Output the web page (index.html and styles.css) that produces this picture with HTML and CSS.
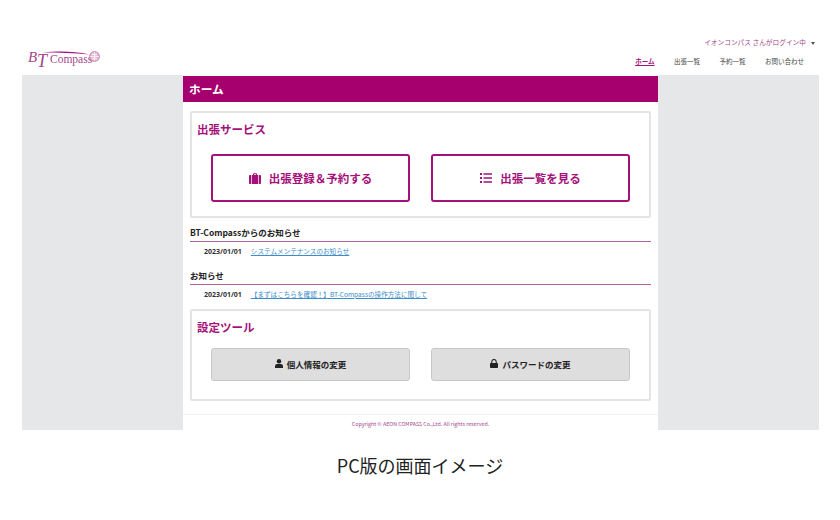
FILE: index.html
```html
<!DOCTYPE html>
<html lang="ja">
<head>
    <meta charset="UTF-8">
    <title>BT Compass</title>
    <link rel="stylesheet" href="styles.css">
</head>
<body>
    <header class="header">
        <a class="logo">
            <svg class="logo-swoosh" width="46" height="5" viewBox="0 0 46 5"><path d="M0 1.500 C14 0 32 0 46 3.500 C32 1.800 14 1.800 0 1.500 Z" fill="#a8127a"/></svg>
            <span class="logo-b">B</span><span class="logo-t">T</span><span class="logo-name">Compass</span>
            <svg class="logo-globe" width="11" height="11" viewBox="0 0 12 12"><circle cx="6" cy="6" r="5.300" fill="#e6bfd8" stroke="#a8548e" stroke-width=".8"/><path d="M1 6h10M6 1v10M3 2.500c2 2 4 2 6 0M3 9.500c2-2 4-2 6 0" stroke="#fff" fill="none" stroke-width=".8"/></svg>
        </a>
        <div class="header-right">
            <div class="user">イオンコンパス さんがログイン中<span class="caret"></span></div>
            <nav class="nav">
                <a class="nav-item active">ホーム</a>
                <a class="nav-item">出張一覧</a>
                <a class="nav-item">予約一覧</a>
                <a class="nav-item">お問い合わせ</a>
            </nav>
        </div>
    </header>

    <div class="stage">
        <main class="main">
            <h1 class="title">ホーム</h1>

            <section class="card service">
                <h2>出張サービス</h2>
                <div class="btn-row">
                    <a class="btn btn-primary">
                        <svg width="12" height="11" viewBox="0 0 12 11"><path d="M4 2V1.200A1 1 0 0 1 5 .2h2a1 1 0 0 1 1 1V2H11a1 1 0 0 1 1 1V10a1 1 0 0 1-1 1H1a1 1 0 0 1-1-1V3a1 1 0 0 1 1-1ZM5 2h2V1.200H5Z" fill="#a5117a" fill-rule="evenodd"/><path d="M2.500 2v9M9.500 2v9" stroke="#fff" stroke-width=".7"/></svg>
                        出張登録＆予約する
                    </a>
                    <a class="btn btn-primary">
                        <svg width="12" height="10" viewBox="0 0 12 10"><path d="M0 0h2v2H0ZM0 4h2v2H0ZM0 8h2v2H0ZM3.500 .2H12v1.600H3.500ZM3.500 4.200H12v1.600H3.500ZM3.500 8.200H12v1.600H3.500Z" fill="#a5117a"/></svg>
                        出張一覧を見る
                    </a>
                </div>
            </section>

            <section class="news news-first">
                <h3>BT-Compassからのお知らせ</h3>
                <div class="news-row"><span class="date">2023/01/01</span><a class="link">システムメンテナンスのお知らせ</a></div>
            </section>
            <section class="news">
                <h3>お知らせ</h3>
                <div class="news-row"><span class="date">2023/01/01</span><a class="link">【まずはこちらを確認！】BT-Compassの操作方法に関して</a></div>
            </section>

            <section class="card tools">
                <h2>設定ツール</h2>
                <div class="btn-row">
                    <a class="btn btn-gray">
                        <svg width="8" height="9" viewBox="0 0 9 10"><circle cx="4.500" cy="2.500" r="2.500" fill="#222"/><path d="M0 10V8a2.500 2.500 0 0 1 2.500-2.500h4A2.500 2.500 0 0 1 9 8v2Z" fill="#222"/></svg>
                        個人情報の変更
                    </a>
                    <a class="btn btn-gray">
                        <svg width="8" height="9" viewBox="0 0 9 10"><path d="M2 4.500V3a2.500 2.500 0 0 1 5 0v1.500" fill="none" stroke="#222" stroke-width="1.200"/><rect y="4.300" width="9" height="5.700" rx=".8" fill="#222"/></svg>
                        パスワードの変更
                    </a>
                </div>
            </section>

            <footer class="footer">Copyright © AEON COMPASS Co.,Ltd. All rights reserved.</footer>
        </main>
    </div>

    <p class="caption">PC版の画面イメージ</p>
</body>
</html>
```

FILE: styles.css
```css
body {
    margin: 0;
    background-color: white;
    font-family: "Noto Sans CJK JP", "Noto Sans", sans-serif;
    color: #333;
}

.header {
    height: 75px;
    margin: 0 21px 0 22px;
    display: flex;
    justify-content: space-between;
}

.logo {
    position: relative;
    width: 80px;
    height: 24px;
    margin: 48px 0 0 6px;
    font-family: "Liberation Serif", serif;
    color: #a5478c;
}

.logo-swoosh {
    position: absolute;
    left: 15px;
    top: 3px;
}

.logo-b,
.logo-t {
    position: absolute;
    font-style: italic;
}

.logo-b {
    left: 0;
    top: 1px;
    font-size: 15px;
    line-height: 16px;
}

.logo-t {
    left: 9px;
    top: 4px;
    font-size: 18px;
    line-height: 18px;
}

.logo-name {
    position: absolute;
    left: 22px;
    top: 4px;
    font-size: 11.500px;
    line-height: 14px;
}

.logo-globe {
    position: absolute;
    left: 61px;
    top: 3px;
}

.header-right {
    display: flex;
    flex-direction: column;
    align-items: flex-end;
}

.user {
    margin: 37px 4px 0 0;
    font-size: 6.700px;
    line-height: 11px;
    color: #a5478c;
}

.caret {
    display: inline-block;
    margin-left: 5px;
    vertical-align: middle;
    border-top: 3px solid #555;
    border-left: 2px solid transparent;
    border-right: 2px solid transparent;
}

.nav {
    display: flex;
    gap: 19.500px;
    margin: 8px 15px 0 0;
    font-size: 6.500px;
    line-height: 11px;
}

.nav-item {
    color: #444;
}

.nav-item.active {
    color: #a5117a;
    font-weight: bold;
    text-decoration: underline;
}

.stage {
    margin: 0 21px 0 22px;
    height: 355px;
    background-color: #e6e7e8;
    display: flex;
    justify-content: center;
    padding-left: 1px;
}

.main {
    width: 475px;
    margin-right: 1px;
    background-color: white;
}

.title {
    margin: 1px 0 0;
    height: 26px;
    padding-left: 6px;
    background-color: #a5006e;
    color: white;
    font-size: 11.700px;
    line-height: 26px;
    font-weight: bold;
}

.card {
    margin: 0 7px;
    border: 2px solid #e4e4e4;
    border-radius: 2px;
    padding: 0 19px;
}

.card h2 {
    margin: 0 -14px;
    color: #a5117a;
    font-size: 11.500px;
    font-weight: bold;
    line-height: 18px;
}

.service {
    margin-top: 9px;
    height: 103px;
}

.service h2 {
    padding-top: 7px;
}

.service .btn-row {
    margin-top: 16px;
}

.tools {
    margin-top: 8px;
    height: 88px;
}

.tools h2 {
    padding-top: 7px;
}

.tools .btn-row {
    margin-top: 12px;
}

.btn-row {
    display: grid;
    grid-template-columns: 199px 199px;
    gap: 21px;
}

.btn {
    box-sizing: border-box;
    display: flex;
    align-items: center;
    justify-content: center;
    font-weight: bold;
    border-radius: 3px;
}

.btn-primary {
    height: 48px;
    gap: 8px;
    border: 2px solid #a5117a;
    color: #a5117a;
    font-size: 11.500px;
}

.btn-gray {
    height: 33px;
    gap: 4px;
    padding-bottom: 2px;
    background-color: #dedede;
    border: 1px solid #c8c8c8;
    color: #222;
    font-size: 8.500px;
}

.news {
    margin: 0 7px;
}

.news-first {
    margin-top: 8px;
}

.news + .news {
    margin-top: 11px;
}

.news h3 {
    margin: 0;
    padding-bottom: 3px;
    border-bottom: 1px solid #b5609f;
    color: #222;
    font-size: 8.500px;
    font-weight: bold;
    line-height: 12px;
}

.news-row {
    display: flex;
    gap: 9px;
    padding: 3px 0 0 14px;
    font-size: 6.600px;
    line-height: 13px;
}

.date {
    font-family: "Open Sans", sans-serif;
    font-size: 7px;
    font-weight: bold;
    color: #333;
}

.link {
    color: #3c8dc9;
    text-decoration: underline;
}

.footer {
    margin-top: 13px;
    padding-top: 4px;
    border-top: 1px solid #f2f2f2;
    text-align: center;
    color: #a5478c;
    font-size: 5.300px;
    line-height: 10px;
}

.caption {
    margin: 22px 0 0;
    text-align: center;
    color: #222;
    font-size: 18px;
    line-height: 26px;
}
```
